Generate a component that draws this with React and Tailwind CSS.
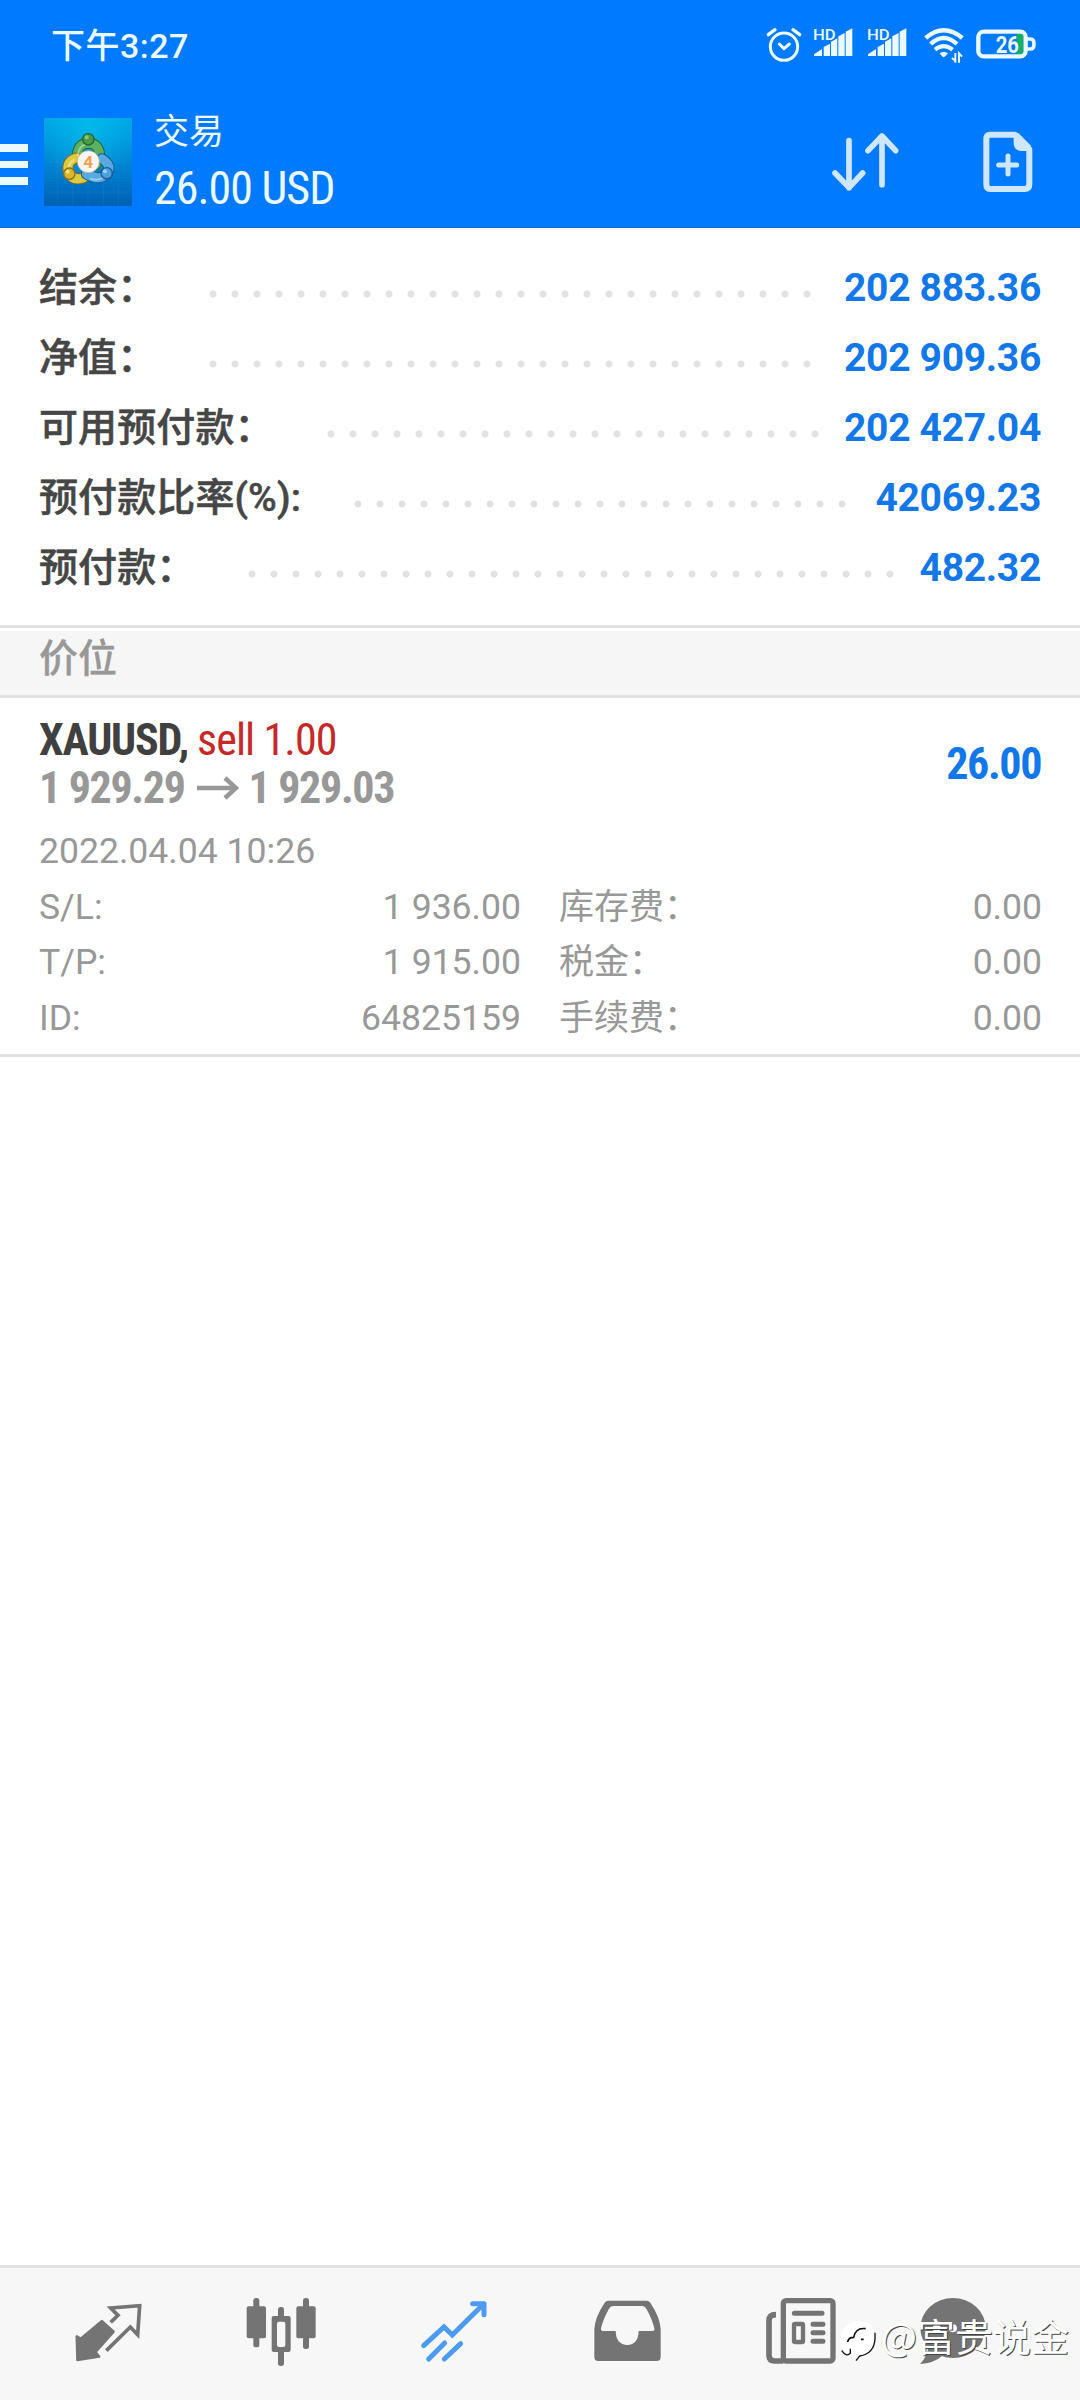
import React from 'react';

const summary = [
  { label: '结余：', value: '202 883.36', dots: 28 },
  { label: '净值：', value: '202 909.36', dots: 28 },
  { label: '可用预付款：', value: '202 427.04', dots: 23 },
  { label: '预付款比率(%):', value: '42069.23', dots: 23 },
  { label: '预付款：', value: '482.32', dots: 30 },
];

const details = [
  { left: 'S/L:', leftValue: '1 936.00', right: '库存费：', rightValue: '0.00' },
  { left: 'T/P:', leftValue: '1 915.00', right: '税金：', rightValue: '0.00' },
  { left: 'ID:', leftValue: '64825159', right: '手续费：', rightValue: '0.00' },
];

const AlarmIcon = () => (
  <svg className="w-9 h-[37px]" viewBox="0 0 108 111" fill="none" stroke="#eaf8ff" strokeWidth="9" strokeLinecap="round" strokeLinejoin="round">
    <circle cx="54" cy="59" r="41" />
    <path d="M40 51 54 65 70 51" />
    <path d="M7 23 27 8M81 8 101 23" strokeWidth="10" />
  </svg>
);

const SignalIcon = () => (
  <svg className="w-[41px] h-[37px]" viewBox="0 0 123 111" fill="#eaf8ff">
    <path d="M3 82 27 66V87H3ZM32 60 51 50V87H32ZM54 44 73 34V87H54ZM76 28 95 18V87H76ZM98 14 118 4V87H98Z" />
    <text x="0" y="39" fontSize="45" fontFamily="Roboto, sans-serif" fontWeight="500" textLength="68" lengthAdjust="spacingAndGlyphs" stroke="#007aff" strokeWidth="6" paintOrder="stroke">HD</text>
  </svg>
);

const WifiIcon = () => (
  <svg className="w-[41px] h-[37px]" viewBox="0 0 123 111" fill="none" stroke="#eaf8ff">
    <path d="M5 33Q59 -14 115 33" strokeWidth="13" />
    <path d="M20 51Q59 15 99 51" strokeWidth="13" />
    <path d="M33 68Q59 47 86 68" strokeWidth="12" />
    <path d="M47 79Q59 70 72 79L64 88Q59 93 54 88Z" fill="#eaf8ff" stroke="none" />
    <path d="M94 78V107M84 93 94 101M105 107V79L114 89" strokeWidth="6" />
  </svg>
);

const BatteryIcon = () => (
  <svg className="w-[61px] h-[37px]" viewBox="0 0 183 111">
    <path d="M122 21H134Q142 21 142 29V73Q142 81 134 81H122Z" fill="#12b25c" />
    <rect x="7" y="14" width="142" height="74" rx="16" fill="none" stroke="#eaf8ff" strokeWidth="13" />
    <path d="M152 36H164Q174 36 174 51Q174 66 164 66H152" fill="none" stroke="#eaf8ff" strokeWidth="11" />
    <text x="59" y="77" fontSize="74" fontWeight="700" fontFamily="Roboto, sans-serif" fill="#eaf8ff" stroke="#007aff" strokeWidth="3" paintOrder="stroke" textLength="70" lengthAdjust="spacingAndGlyphs">26</text>
  </svg>
);

const AppLogo = () => (
  <svg className="w-[88px] h-[88px] ml-4" viewBox="0 0 264 264">
    <defs>
      <linearGradient id="sky" x1="0" y1="0" x2="0" y2="1">
        <stop offset="0" stopColor="#00a5e2" />
        <stop offset="0.55" stopColor="#0083d2" />
        <stop offset="1" stopColor="#005fb4" />
      </linearGradient>
      <radialGradient id="glow" cx="0.5" cy="0.1" r="0.6">
        <stop offset="0" stopColor="#00c4f0" stopOpacity="0.7" />
        <stop offset="1" stopColor="#00c4f0" stopOpacity="0" />
      </radialGradient>
    </defs>
    <rect width="264" height="264" fill="url(#sky)" />
    <rect width="264" height="264" fill="url(#glow)" />
    <path d="M41 0V264M86 0V264M132 0V264M178 0V264M223 0V264M0 41H264M0 86H264M0 132H264M0 178H264M0 222H264" stroke="#39b5e8" strokeOpacity="0.2" strokeWidth="2" />
    <g fill="none" strokeLinecap="round" strokeLinejoin="round">
      <path d="M100 122Q98 76 133 76Q169 76 167 122L156 140" stroke="#24682f" strokeWidth="33" />
      <path d="M100 122Q98 76 133 76Q169 76 167 122L156 140" stroke="#5cb060" strokeWidth="27" />
      <path d="M98 120Q66 128 73 160Q84 190 118 180" stroke="#876f12" strokeWidth="33" />
      <path d="M98 120Q66 128 73 160Q84 190 118 180" stroke="#dccb3c" strokeWidth="27" />
      <path d="M174 122Q204 142 190 164Q168 192 127 168" stroke="#17588f" strokeWidth="33" />
      <path d="M174 122Q204 142 190 164Q168 192 127 168" stroke="#56aae0" strokeWidth="27" />
      <path d="M102 112Q104 86 123 80M74 146Q78 132 89 126M140 182Q158 190 176 180" stroke="#ffffff" strokeOpacity="0.4" strokeWidth="6" />
    </g>
    <circle cx="133" cy="64" r="17" fill="#4b9b46" stroke="#25662c" strokeWidth="4" />
    <circle cx="76" cy="167" r="17" fill="#d8b52c" stroke="#8a7015" strokeWidth="4" />
    <circle cx="188" cy="166" r="17" fill="#4aa0da" stroke="#195b93" strokeWidth="4" />
    <circle cx="128" cy="58" r="6" fill="#a8d89c" fillOpacity="0.7" />
    <circle cx="71" cy="161" r="6" fill="#fff2a0" fillOpacity="0.7" />
    <circle cx="183" cy="160" r="6" fill="#bfe6ff" fillOpacity="0.7" />
    <circle cx="133" cy="131" r="33" fill="#f8f6f2" stroke="#b9a48b" strokeWidth="2" />
    <text x="133" y="149" textAnchor="middle" fontSize="52" fontWeight="700" fontFamily="Roboto, sans-serif" fill="#f0a050">4</text>
  </svg>
);

const SortIcon = () => (
  <svg className="w-[68px] h-[62px]" viewBox="0 0 204 186" fill="none" stroke="#cfe6ff" strokeWidth="17" strokeLinecap="round" strokeLinejoin="round">
    <path d="M51 29V170M9 126 51 170 92 126" />
    <path d="M150 161V16M108 59 150 15 191 59" />
  </svg>
);

const NewOrderIcon = () => (
  <svg className="w-[50px] h-[62px] ml-[83px]" viewBox="0 0 150 186" fill="none" stroke="#cfe6ff">
    <path d="M22 11H95L139 55V160Q139 174 125 174H22Q10 174 10 160V24Q10 11 22 11Z" strokeWidth="18" strokeLinejoin="round" />
    <path d="M92 6H106L144 44V60H112Q92 56 92 36Z" fill="#cfe6ff" stroke="none" />
    <path d="M47 102H101M75 75V129" strokeWidth="15" strokeLinecap="round" />
  </svg>
);

const QuotesIcon = () => (
  <svg className="w-[72px] h-[72px]" viewBox="0 0 216 216" fill="#747474" stroke="#747474" strokeLinejoin="round">
    <path d="M11 121 23 128 87 75 122 107 68 168 79 182 13 192Z" strokeWidth="7" />
    <path d="M113 79 135 58 113 36 200 29 194 116 172 93 100 164" fill="none" strokeWidth="11" strokeLinejoin="miter" />
  </svg>
);

const ChartIcon = () => (
  <svg className="w-[72px] h-[72px]" viewBox="0 0 216 216" fill="#747474">
    <rect x="5" y="31" width="58" height="96" rx="6" />
    <rect x="25" y="6" width="18" height="148" rx="8" />
    <rect x="80" y="60" width="57" height="108" rx="6" />
    <rect x="99" y="33" width="18" height="177" rx="8" />
    <rect x="96" y="77" width="25" height="76" rx="6" fill="#f7f7f7" />
    <rect x="154" y="31" width="58" height="96" rx="6" />
    <rect x="174" y="6" width="18" height="153" rx="8" />
  </svg>
);

const TradeIcon = () => (
  <svg className="w-[72px] h-[72px]" viewBox="0 0 216 216" fill="none" stroke="#4b9bf1" strokeWidth="15" strokeLinecap="round" strokeLinejoin="round">
    <path d="M20 149 81 93 106 117 199 25" strokeLinejoin="miter" />
    <path d="M167 23H201V56" />
    <path d="M83 141 35 189M131 143 82 189" />
  </svg>
);

const HistoryIcon = () => (
  <svg className="w-[72px] h-[72px]" viewBox="0 0 216 216" fill="#747474">
    <path
      fillRule="evenodd"
      d="M58 14H173Q180 14 184 20Q214 65 215 100V183Q215 195 203 195H28Q16 195 16 183V100Q17 65 47 20Q51 14 58 14ZM72 30Q64 30 60 38Q42 70 36 97Q35 105 42 105H80Q81 146 115 147Q148 146 149 105H190Q198 105 196 97Q190 70 172 38Q168 30 160 30Z"
    />
  </svg>
);

const NewsIcon = () => (
  <svg className="w-[72px] h-[72px] ml-[3px]" viewBox="0 0 216 216" fill="none" stroke="#747474">
    <rect x="58" y="14" width="149" height="181" rx="8" strokeWidth="16" />
    <path d="M36 56Q15 56 15 74V178Q15 195 32 195H58" strokeWidth="17" />
    <path d="M91 52H174M147 85H177M147 110H177M147 136H177" strokeWidth="15" strokeLinecap="round" />
    <rect x="90" y="84" width="27" height="54" rx="3" strokeWidth="13" />
  </svg>
);

const ChatIcon = () => (
  <svg className="w-[72px] h-[72px] -ml-[19px]" viewBox="0 0 216 216" fill="#747474">
    <ellipse cx="108" cy="96" rx="98" ry="90" />
    <path d="M35 150Q30 185 9 204Q50 203 78 178Z" />
    <circle cx="59" cy="97" r="12" fill="#f7f7f7" />
    <circle cx="108" cy="97" r="12" fill="#f7f7f7" />
    <circle cx="157" cy="97" r="12" fill="#f7f7f7" />
  </svg>
);

const Header = () => (
  <header className="h-[228px] bg-[#007aff] border-b border-[#1668c8] text-[#eaf8ff]">
    {/* Status bar */}
    <div className="h-[91px] flex items-center pl-[51px] pr-[43px]">
      <span className="text-[34px] font-medium leading-none tracking-[0.5px]">下午3:27</span>
      <div className="ml-auto flex items-center">
        <AlarmIcon />
        <div className="w-[11px]" />
        <SignalIcon />
        <div className="w-[13px]" />
        <SignalIcon />
        <div className="w-4" />
        <WifiIcon />
        <div className="w-[11px]" />
        <BatteryIcon />
      </div>
    </div>
    {/* Title bar */}
    <div className="flex h-[136px] items-start">
      <div className="mt-[53px] flex w-7 flex-col gap-[9px]">
        <div className="h-[7.5px] bg-[#eaf8ff]" />
        <div className="h-[7.5px] bg-[#eaf8ff]" />
        <div className="h-[7.5px] bg-[#eaf8ff]" />
      </div>
      <div className="mt-[27px]">
        <AppLogo />
      </div>
      <div className="ml-[22px] mt-6">
        <div className="text-[35px] leading-[36px]">交易</div>
        <div className="mt-[9px] whitespace-nowrap text-[46px] font-[450] leading-[56px] tracking-[-1px] font-stretch-[75%]">26.00 USD</div>
      </div>
      <div className="ml-auto mr-[47px] mt-10 flex">
        <SortIcon />
        <NewOrderIcon />
      </div>
    </div>
  </header>
);

const App = () => {
  return (
    <div className="relative flex h-[2400px] w-[1080px] flex-col overflow-hidden bg-white font-['Roboto','Noto_Sans_CJK_SC',sans-serif]" lang="zh-CN">
      <Header />
      {/* Account summary */}
      <section className="h-[397px] pt-[25px] pl-[39px] pr-[39px]">
        {summary.map((row) => (
          <div key={row.label} className="flex h-[70px] items-center text-[39px] leading-none">
            <span className="font-medium tracking-[0.1px] text-[#464646] [-webkit-text-stroke:0.5px_#464646]">{row.label}</span>
            <span
              className="ml-[46px] mt-3 h-2 bg-[radial-gradient(circle,#e2e2e2_3px,transparent_4px)] bg-[length:22px_8px]"
              style={{ width: row.dots * 22 }}
            />
            <span className="ml-auto font-bold tracking-[-0.3px] text-[#1277e8]">{row.value}</span>
          </div>
        ))}
      </section>
      {/* Positions title */}
      <div className="h-[73px] border-y-[3px] border-[#e2e2e2] pt-[3px]">
        <div className="flex h-16 items-center bg-[#f6f6f6] pl-[39px] pb-[7px] text-[39px] font-medium leading-none text-[#989898] [-webkit-text-stroke:0.3px_#989898]">价位</div>
      </div>
      {/* Position */}
      <section className="h-[359px] border-b-[3px] border-[#e2e2e2] pl-[39px] pr-[39px] pt-[18px]">
        <div className="flex items-center justify-between">
          <div className="text-[44px] leading-[48px] tracking-[-1.2px] font-stretch-[75%]">
            <div>
              <span className="font-bold text-[#404040]">XAUUSD,</span> <span className="tracking-[-0.9px] text-[#c62828]">sell 1.00</span>
            </div>
            <div className="flex items-center font-bold tracking-[-1.35px] text-[#989898]">
              1 929.29
              <svg className="ml-3 mr-[10px] h-6 w-[42px]" viewBox="0 0 42 24" fill="none" stroke="#989898" strokeWidth="4.5">
                <path d="M0 12H39M28 2 39 12 28 22" />
              </svg>
              1 929.03
            </div>
          </div>
          <div className="text-[44px] font-bold leading-[48px] tracking-[-1.4px] text-[#1277e8] font-stretch-[75%]">26.00</div>
        </div>
        <div className="mt-[11px] text-[35.6px] font-[380] leading-[56px] text-[#989898]">2022.04.04 10:26</div>
        <div className="pt-px">
          {details.map((row) => (
            <div key={row.left} className="flex h-[55.5px] items-center text-[35.6px] font-[380] leading-none text-[#989898]">
              <div className="flex w-[482px] justify-between">
                <span>{row.left}</span>
                <span>{row.leftValue}</span>
              </div>
              <div className="ml-[38px] -mr-px flex flex-1 justify-between">
                <span className="text-[35px]">{row.right}</span>
                <span>{row.rightValue}</span>
              </div>
            </div>
          ))}
        </div>
      </section>
      {/* Bottom navigation */}
      <nav className="mt-auto flex h-[135px] gap-[100px] border-t-[3px] border-[#e2e2e2] bg-[#f7f7f7] pl-[73px] pt-7">
        <QuotesIcon />
        <ChartIcon />
        <TradeIcon />
        <HistoryIcon />
        <NewsIcon />
        <ChatIcon />
      </nav>
      {/* Watermark */}
      <div className="absolute bottom-[36px] left-[839px] flex items-center text-white">
        <svg className="h-12 w-[38px]" viewBox="0 0 114 144" fill="none">
          <path d="M58 14Q107 16 108 62Q108 112 62 120L51 138 42 122Q6 108 4 72Q8 20 58 14Z" fill="#ffffff" />
          <path d="M108 50V68Q106 112 62 120L51 134M8 104Q22 124 34 112V98" stroke="#111111" strokeWidth="4" />
          <path d="M26 78Q28 64 44 64Q50 34 80 38M66 70H74" stroke="#111111" strokeWidth="5" />
        </svg>
        <span className="mb-[10px] ml-1 whitespace-nowrap font-['Noto_Sans_CJK_SC',sans-serif] text-[38px] leading-none [text-shadow:1px_1px_0_#444]">@富贵说金</span>
      </div>
    </div>
  );
};

export default App;
